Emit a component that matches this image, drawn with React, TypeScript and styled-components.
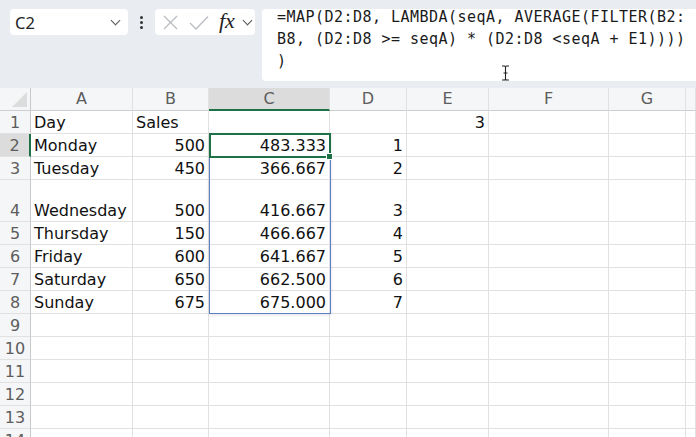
import React from 'react';
import styled, { createGlobalStyle } from 'styled-components';

const GlobalStyle = createGlobalStyle`
  html, body {
    margin: 0;
    padding: 0;
    background: #ffffff;
  }
  body {
    width: 696px;
    height: 437px;
    overflow: hidden;
    font-family: 'DejaVu Sans', sans-serif;
  }
`;

const COLS = ['A', 'B', 'C', 'D', 'E', 'F', 'G', ''];
const ROW_HEIGHTS = [23, 23, 23, 42, 23, 23, 23, 23, 23, 23, 23, 23, 23, 23];

type Cell = { v: string; num?: boolean };

const DATA: Cell[][] = [
  [{ v: 'Day' }, { v: 'Sales' }, { v: '' }, { v: '' }, { v: '3', num: true }],
  [{ v: 'Monday' }, { v: '500', num: true }, { v: '483.333', num: true }, { v: '1', num: true }],
  [{ v: 'Tuesday' }, { v: '450', num: true }, { v: '366.667', num: true }, { v: '2', num: true }],
  [{ v: 'Wednesday' }, { v: '500', num: true }, { v: '416.667', num: true }, { v: '3', num: true }],
  [{ v: 'Thursday' }, { v: '150', num: true }, { v: '466.667', num: true }, { v: '4', num: true }],
  [{ v: 'Friday' }, { v: '600', num: true }, { v: '641.667', num: true }, { v: '5', num: true }],
  [{ v: 'Saturday' }, { v: '650', num: true }, { v: '662.500', num: true }, { v: '6', num: true }],
  [{ v: 'Sunday' }, { v: '675', num: true }, { v: '675.000', num: true }, { v: '7', num: true }],
];

const FORMULA = [
  '=MAP(D2:D8, LAMBDA(seqA, AVERAGE(FILTER(B2:',
  'B8, (D2:D8 >= seqA) * (D2:D8 <seqA + E1))))',
  ')',
];

export default function App() {
  return (
    <>
      <GlobalStyle />
      <Page>
        <Toolbar>
          <NameBox>
            <span>C2</span>
            <Chevron />
          </NameBox>
          <Dots>
            <i />
            <i />
            <i />
          </Dots>
          <FxBox>
            <ToolIcon width="15" height="15" viewBox="0 0 15 15">
              <path d="M1 1 L14 14 M14 1 L1 14" stroke="#b9bcc0" strokeWidth="1.3" fill="none" />
            </ToolIcon>
            <ToolIcon $gap={11} width="20" height="15" viewBox="0 0 20 15">
              <path d="M1 8 L7 14 L19 1.5" stroke="#b9bcc0" strokeWidth="1.3" fill="none" />
            </ToolIcon>
            <FxLabel>fx</FxLabel>
            <Chevron $gap={9} />
          </FxBox>
          <FormulaBox>
            <FormulaText>
              {FORMULA.map((line, i) => (
                <div key={i}>{line}</div>
              ))}
            </FormulaText>
            <IBeam width="9" height="16" viewBox="0 0 9 16">
              <path d="M1 1 H3.5 Q4.5 1 4.5 2 V14 Q4.5 15 3.5 15 H1 M8 1 H5.5 Q4.5 1 4.5 2 M4.5 14 Q4.5 15 5.5 15 H8 M2.5 8 H6.5" stroke="#222" strokeWidth="1.1" fill="none" />
            </IBeam>
          </FormulaBox>
        </Toolbar>

        <Sheet>
          <HeadCell $corner>
            <Corner />
          </HeadCell>
          {COLS.map((c, i) => (
            <HeadCell key={c + i} $active={c === 'C'}>
              {c}
            </HeadCell>
          ))}

          {ROW_HEIGHTS.map((h, r) => (
            <React.Fragment key={r}>
              <RowNum $h={h} $active={r === 1}>
                {r + 1}
              </RowNum>
              {COLS.map((_, c) => {
                const cell = DATA[r]?.[c];
                return (
                  <DataCell key={c} $h={h} $num={cell?.num}>
                    {cell?.v}
                  </DataCell>
                );
              })}
            </React.Fragment>
          ))}

          <RangeBox />
          <ActiveCell>
            <FillHandle />
          </ActiveCell>
        </Sheet>
      </Page>
    </>
  );
}

const Page = styled.div`
  width: 696px;
  height: 437px;
  overflow: hidden;
  background: #ffffff;
`;

const Toolbar = styled.div`
  height: 88px;
  background: #e9edf2;
  display: flex;
  align-items: flex-start;
  padding: 9px 0 0 10px;
  box-sizing: border-box;
`;

const NameBox = styled.div`
  width: 118px;
  height: 26px;
  box-sizing: border-box;
  background: #ffffff;
  border-radius: 4px;
  display: flex;
  align-items: center;
  justify-content: space-between;
  padding: 0 6px 0 5px;
  font-family: 'Noto Sans', sans-serif;
  font-size: 16.5px;
  color: #242424;
`;

const Chevron = styled.span<{ $gap?: number }>`
  width: 6px;
  height: 6px;
  border-right: 1.3px solid #555;
  border-bottom: 1.3px solid #555;
  transform: rotate(45deg);
  margin: 0 3px 4px ${({ $gap }) => $gap ?? 0}px;
`;

const Dots = styled.div`
  width: 27px;
  height: 26px;
  display: flex;
  flex-direction: column;
  align-items: center;
  justify-content: center;
  gap: 2px;

  i {
    width: 3px;
    height: 3px;
    border-radius: 50%;
    background: #333;
  }
`;

const FxBox = styled.div`
  width: 100px;
  height: 26px;
  box-sizing: border-box;
  background: #ffffff;
  border-radius: 4px;
  display: flex;
  align-items: center;
  padding: 0 0 0 8px;
`;

const ToolIcon = styled.svg<{ $gap?: number }>`
  flex-shrink: 0;
  margin-left: ${({ $gap }) => $gap ?? 0}px;
`;

const FxLabel = styled.span`
  font-family: 'Liberation Serif', serif;
  font-style: italic;
  font-size: 22px;
  color: #222;
  margin-left: 10px;
  line-height: 1;
  margin-bottom: 2px;
`;

const FormulaBox = styled.div`
  position: relative;
  flex: 1;
  height: 72px;
  margin-left: 7px;
  background: #ffffff;
  border-radius: 4px 0 0 4px;
  padding: 0 0 0 15px;
  box-sizing: border-box;
  overflow: hidden;
`;

const FormulaText = styled.div`
  margin-top: -3px;
  font-family: 'DejaVu Sans Mono', monospace;
  font-size: 15px;
  letter-spacing: 0.47px;
  line-height: 22px;
  color: #1a1a1a;
  white-space: pre;
`;

const IBeam = styled.svg`
  position: absolute;
  left: 239px;
  top: 56px;
`;

const Sheet = styled.div`
  position: relative;
  display: grid;
  grid-template-columns: 31px 102px 76px 121px 77px 82px 120px 77px 1fr;
  grid-auto-rows: auto;
`;

const HeadCell = styled.div<{ $active?: boolean; $corner?: boolean }>`
  position: relative;
  height: 23px;
  box-sizing: border-box;
  background: ${({ $active }) => ($active ? '#dcdcdc' : '#f5f6f7')};
  border-right: 1px solid ${({ $corner }) => ($corner ? '#c8c8c8' : '#e1e1e1')};
  border-bottom: ${({ $active }) => ($active ? '2px solid #1e7145' : '1px solid #cfcfcf')};
  display: flex;
  align-items: center;
  justify-content: center;
  font-size: 16px;
  color: #5d5d5d;
  line-height: 1;
  padding-top: ${({ $active }) => ($active ? '1px' : '0')};
`;

const Corner = styled.span`
  position: absolute;
  right: 3px;
  bottom: 3px;
  width: 0;
  height: 0;
  border-left: 15px solid transparent;
  border-bottom: 15px solid #dcdcdc;
`;

const RowNum = styled.div<{ $h: number; $active?: boolean }>`
  height: ${({ $h }) => $h}px;
  box-sizing: border-box;
  background: ${({ $active }) => ($active ? '#dcdcdc' : '#f5f6f7')};
  border-right: ${({ $active }) => ($active ? '2px solid #1e7145' : '1px solid #c8c8c8')};
  border-bottom: 1px solid #e1e1e1;
  display: flex;
  align-items: flex-end;
  justify-content: center;
  padding-bottom: 1px;
  font-size: 16px;
  line-height: 18px;
  color: #5d5d5d;
`;

const DataCell = styled.div<{ $h: number; $num?: boolean }>`
  height: ${({ $h }) => $h}px;
  box-sizing: border-box;
  border-right: 1px solid #e1e1e1;
  border-bottom: 1px solid #e1e1e1;
  display: flex;
  align-items: flex-end;
  justify-content: ${({ $num }) => ($num ? 'flex-end' : 'flex-start')};
  padding: 0 3px 1px 3px;
  font-size: 16px;
  line-height: 18px;
  color: #111;
  white-space: nowrap;
  overflow: hidden;
`;

const RangeBox = styled.div`
  position: absolute;
  left: 209px;
  top: 45px;
  width: 122px;
  height: 181px;
  box-sizing: border-box;
  border: 1px solid #5b80c4;
  box-shadow: 0 1px 3px rgba(0, 0, 0, 0.12);
  pointer-events: none;
`;

const ActiveCell = styled.div`
  position: absolute;
  left: 209px;
  top: 45px;
  width: 122px;
  height: 25px;
  box-sizing: border-box;
  border: 2px solid #1e7145;
`;

const FillHandle = styled.span`
  position: absolute;
  right: -4px;
  bottom: -4px;
  width: 5px;
  height: 5px;
  background: #1e7145;
  border: 1px solid #ffffff;
`;
